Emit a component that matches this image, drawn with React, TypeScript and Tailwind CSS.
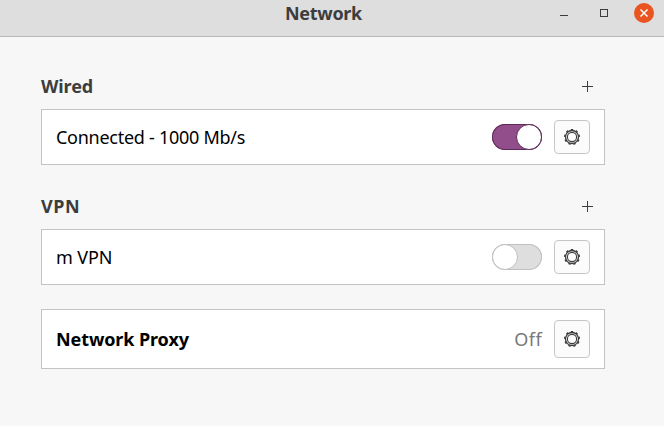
import type { ReactNode } from "react";

const TEETH = [0, 40, 80, 120, 160, 200, 240, 280, 320];

function Gear() {
  return (
    <svg width="18" height="18" viewBox="-9 -9 18 18" fill="none" stroke="#3d3d3d">
      <circle r="6.5" strokeWidth="1.3" />
      <circle r="4.6" strokeWidth="1.1" />
      {TEETH.map((a) => (
        <path key={a} d="M-1.2 -7.3H1.2" strokeWidth="1.4" transform={`rotate(${a})`} />
      ))}
    </svg>
  );
}

function GearButton({ tall = false }: { tall?: boolean }) {
  return (
    <button
      className={`flex w-9 items-center justify-center rounded-[4px] border border-[#c6c6c6] bg-[#fbfbfb] ${tall ? "h-[38px]" : "h-[34px]"}`}
    >
      <Gear />
    </button>
  );
}

function Toggle({ on }: { on: boolean }) {
  return (
    <div
      className={`flex h-[26px] w-[50px] rounded-full ${on ? "justify-end bg-[#924d8b] shadow-[inset_0_0_0_1px_#5b2b57]" : "bg-[#dedede] shadow-[inset_0_0_0_1px_#c0c0c0]"}`}
    >
      <div className={`size-[26px] rounded-full border bg-white ${on ? "border-[#5b2b57]" : "border-[#c0c0c0]"}`} />
    </div>
  );
}

function Heading({ children, className }: { children: ReactNode; className: string }) {
  return (
    <div className="flex h-6 items-center justify-between pr-3">
      <h2 className={`text-[18px] leading-6 font-bold text-[#3d3d3d] ${className}`}>{children}</h2>
      <svg width="11" height="11" viewBox="0 0 11 11" stroke="#3d3d3d">
        <path d="M0 5.5H11M5.5 0V11" />
      </svg>
    </div>
  );
}

function Card({ children, className }: { children: ReactNode; className: string }) {
  return (
    <div className={`flex items-center border border-[#c3c3c3] bg-white px-[14px] ${className}`}>
      {children}
    </div>
  );
}

export default function App() {
  return (
    <div className="h-[426px] w-[664px] overflow-hidden bg-[#f7f7f7] font-['Noto_Sans',sans-serif] text-[18px] leading-6 whitespace-nowrap text-black">
      <header className="flex h-[37px] items-start border-b border-[#b9b9b9] bg-[#dedede] pr-[10px]">
        <h1 className="mt-[1px] ml-[110px] flex-1 text-center text-[18px] leading-6 font-bold tracking-[-0.3px] text-[#3d3d3d]">Network</h1>
        <div className="flex w-[117px] justify-end pt-[3px]">
          <svg width="94" height="20" viewBox="0 0 94 20" fill="none">
            <path d="M0 12.5H8" stroke="#3d3d3d" />
            <rect x="40.5" y="6.5" width="7" height="7" stroke="#3d3d3d" />
            <circle cx="84" cy="10" r="10" fill="#e95420" />
            <path d="M80.5 6.5L87.5 13.5M87.5 6.5L80.5 13.5" stroke="#fff" strokeWidth="1.5" />
          </svg>
        </div>
      </header>
      <main className="pt-[37px] pr-[59px] pl-[41px]">
        <Heading className="tracking-[-0.1px]">Wired</Heading>
        <Card className="mt-[11px] h-14">
          <span className="flex-1 tracking-[-0.27px]">Connected - 1000 Mb/s</span>
          <Toggle on />
          <div className="ml-3"><GearButton /></div>
        </Card>
        <div className="h-[29px]" />
        <Heading className="tracking-[0.5px]">VPN</Heading>
        <Card className="mt-[11px] h-14">
          <span className="flex-1 tracking-[-0.1px]">m VPN</span>
          <Toggle on={false} />
          <div className="ml-3"><GearButton /></div>
        </Card>
        <Card className="mt-6 h-[60px]">
          <span className="flex-1 font-bold tracking-[-0.1px]">Network Proxy</span>
          <span className="tracking-[0.4px] text-[#787878]">Off</span>
          <div className="ml-3"><GearButton tall /></div>
        </Card>
      </main>
    </div>
  );
}
